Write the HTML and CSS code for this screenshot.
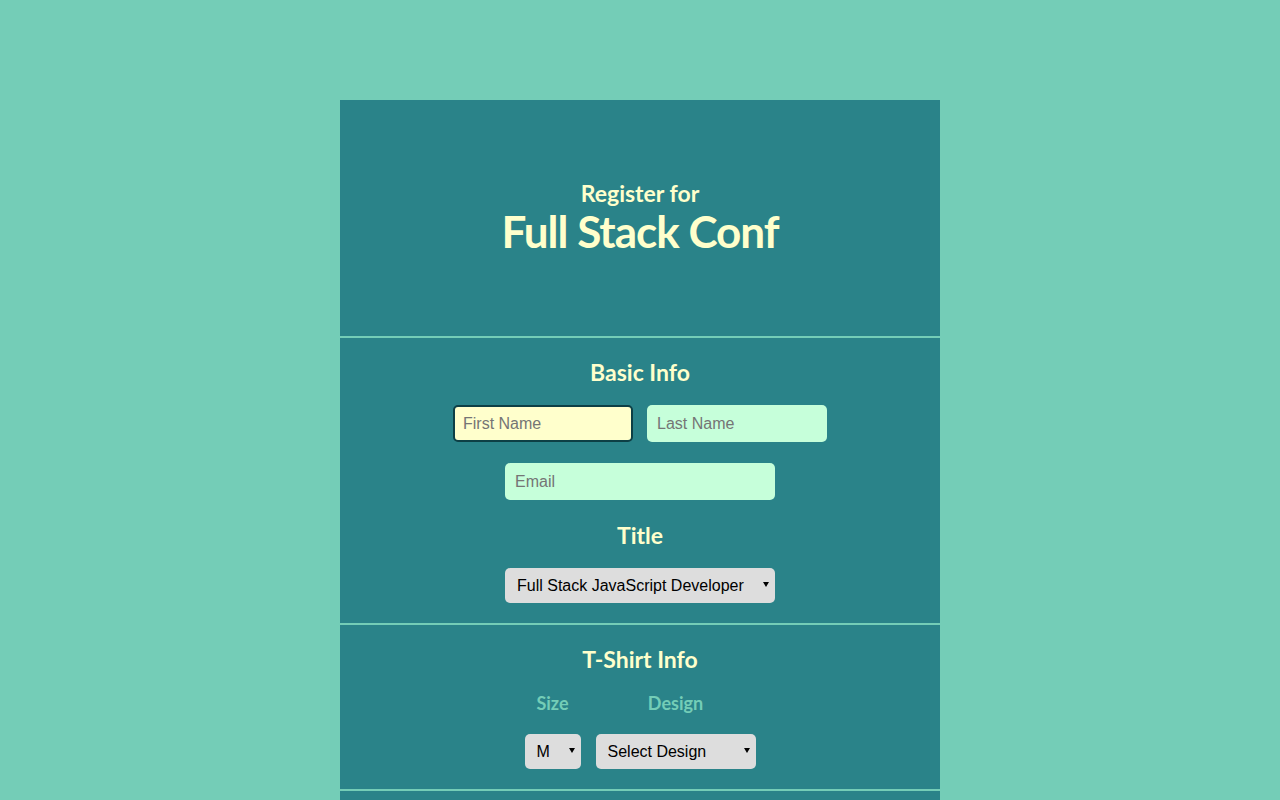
FILE: index.html
```html
<!DOCTYPE html>
<html lang="en">
<head>
<meta charset="utf-8">
<title>Register for Full Stack Conf</title>
<link rel="stylesheet" href="styles.css">
</head>
<body>
<div class="container">
  <header class="header">
    <span class="header-sub">Register for</span>
    <h1 class="header-title">Full Stack Conf</h1>
  </header>
  <form class="form">
    <section class="section">
      <h2 class="section-title">Basic Info</h2>
      <div class="row">
        <input class="field field-half" type="text" placeholder="First Name" autofocus>
        <input class="field field-half" type="text" placeholder="Last Name">
      </div>
      <input class="field field-wide" type="email" placeholder="Email">
      <h2 class="section-title title-label">Title</h2>
      <span class="select-wrap select-wide">
        <select class="select">
          <option>Full Stack JavaScript Developer</option>
          <option>Front End Developer</option>
          <option>Back End Developer</option>
        </select>
      </span>
    </section>
    <section class="section">
      <h2 class="section-title">T-Shirt Info</h2>
      <div class="shirt-row">
        <div class="shirt-col">
          <label class="shirt-label">Size</label>
          <span class="select-wrap select-size">
            <select class="select">
              <option>S</option>
              <option selected>M</option>
              <option>L</option>
            </select>
          </span>
        </div>
        <div class="shirt-col">
          <label class="shirt-label">Design</label>
          <span class="select-wrap select-design">
            <select class="select">
              <option>Select Design</option>
            </select>
          </span>
        </div>
      </div>
    </section>
    <section class="section section-next"></section>
  </form>
</div>
</body>
</html>
```
FILE: styles.css
```css
html, body {
  margin: 0;
  padding: 0;
}
body {
  background: #74cdb7;
  font-family: "Liberation Sans", Arial, sans-serif;
}
.container {
  width: 600px;
  margin: 100px auto 0;
  background: #2a8389;
}
.header {
  height: 236px;
  display: flex;
  flex-direction: column;
  align-items: center;
  justify-content: center;
  color: #ffffcc;
  font-family: Lato, "Open Sans", sans-serif;
  font-weight: 700;
}
.header-sub {
  font-size: 23px;
  line-height: 24px;
  margin-bottom: 2px;
}
.header-title {
  margin: 0;
  font-size: 44px;
  line-height: 48px;
  font-weight: 700;
  letter-spacing: -1px;
}
.form {
  margin: 0;
}
.section {
  border-top: 2px solid #74cdb7;
  padding: 19px 0 20px;
  display: flex;
  flex-direction: column;
  align-items: center;
}
.section-title {
  margin: 0;
  font-family: Lato, "Open Sans", sans-serif;
  font-weight: 700;
  font-size: 23px;
  line-height: 30px;
  color: #ffffcc;
}
.row {
  display: flex;
  gap: 14px;
  margin-top: 18px;
}
.field {
  box-sizing: border-box;
  height: 37px;
  border: 2px solid transparent;
  border-radius: 5px;
  background: #c6ffda;
  padding: 0 8px;
  font-family: "Liberation Sans", Arial, sans-serif;
  font-size: 16px;
  color: #222;
  outline: none;
}
.field::placeholder {
  color: #757575;
}
.field:focus {
  background: #ffffcc;
  border-color: #0d3f45;
}
.field-half {
  width: 180px;
}
.field-wide {
  width: 270px;
  margin-top: 21px;
}
.title-label {
  margin-top: 20px;
}
.select-wrap {
  position: relative;
  display: block;
  height: 35px;
}
.select-wrap::after {
  content: "";
  position: absolute;
  right: 6px;
  top: 14px;
  border-left: 3px solid transparent;
  border-right: 3px solid transparent;
  border-top: 5px solid #000;
  pointer-events: none;
}
.select {
  -webkit-appearance: none;
  appearance: none;
  box-sizing: border-box;
  width: 100%;
  height: 35px;
  border: none;
  border-radius: 5px;
  background: #dddddd;
  color: #000;
  font-family: "Liberation Sans", Arial, sans-serif;
  font-size: 16px;
  padding: 0 16px 0 12px;
  outline: none;
  margin: 0;
}
.select-wide {
  width: 270px;
  margin-top: 18px;
}
.shirt-row {
  display: flex;
  gap: 15px;
  margin-top: 17px;
}
.shirt-col {
  display: flex;
  flex-direction: column;
  align-items: center;
  gap: 19px;
}
.shirt-label {
  font-family: Lato, "Open Sans", sans-serif;
  font-weight: 700;
  font-size: 18px;
  line-height: 24px;
  color: #74cdb7;
}
.select-size {
  width: 56px;
}
.select-design {
  width: 160px;
}
.section-next {
  min-height: 40px;
}
```
